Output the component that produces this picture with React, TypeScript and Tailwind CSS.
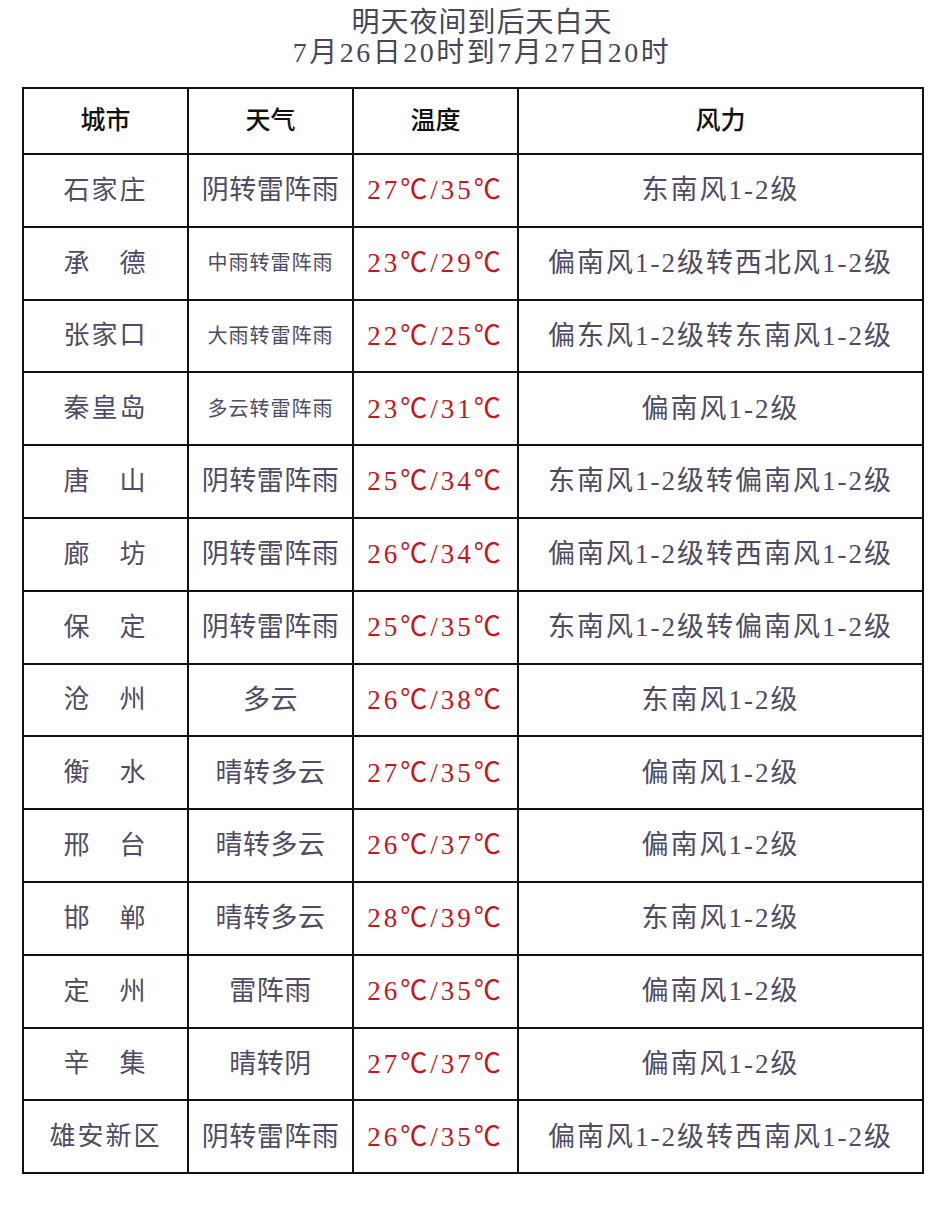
const ROWS: { city: string; weather: string; small?: boolean; temp: string; wind: string }[] = [
  { city: "石家庄", weather: "阴转雷阵雨", temp: "27℃/35℃", wind: "东南风1-2级" },
  { city: "承　德", weather: "中雨转雷阵雨", small: true, temp: "23℃/29℃", wind: "偏南风1-2级转西北风1-2级" },
  { city: "张家口", weather: "大雨转雷阵雨", small: true, temp: "22℃/25℃", wind: "偏东风1-2级转东南风1-2级" },
  { city: "秦皇岛", weather: "多云转雷阵雨", small: true, temp: "23℃/31℃", wind: "偏南风1-2级" },
  { city: "唐　山", weather: "阴转雷阵雨", temp: "25℃/34℃", wind: "东南风1-2级转偏南风1-2级" },
  { city: "廊　坊", weather: "阴转雷阵雨", temp: "26℃/34℃", wind: "偏南风1-2级转西南风1-2级" },
  { city: "保　定", weather: "阴转雷阵雨", temp: "25℃/35℃", wind: "东南风1-2级转偏南风1-2级" },
  { city: "沧　州", weather: "多云", temp: "26℃/38℃", wind: "东南风1-2级" },
  { city: "衡　水", weather: "晴转多云", temp: "27℃/35℃", wind: "偏南风1-2级" },
  { city: "邢　台", weather: "晴转多云", temp: "26℃/37℃", wind: "偏南风1-2级" },
  { city: "邯　郸", weather: "晴转多云", temp: "28℃/39℃", wind: "东南风1-2级" },
  { city: "定　州", weather: "雷阵雨", temp: "26℃/35℃", wind: "偏南风1-2级" },
  { city: "辛　集", weather: "晴转阴", temp: "27℃/37℃", wind: "偏南风1-2级" },
  { city: "雄安新区", weather: "阴转雷阵雨", temp: "26℃/35℃", wind: "偏南风1-2级转西南风1-2级" },
];

const cell = "border-2 border-[#111] text-center align-middle p-0";

export default function App() {
  return (
    <div className="w-[942px] h-[1218px] bg-white font-['Liberation_Serif','Noto_Sans_CJK_SC',serif]">
      {/* title */}
      <div className="pt-[8px] pl-[22px] text-center text-[28px] leading-[30px] text-[#4a4659]">
        <div className="tracking-[1px]">明天夜间到后天白天</div>
        <div className="tracking-[2.5px]">7月26日20时到7月27日20时</div>
      </div>

      <table className="mt-[19px] ml-[22px] w-[900px] table-fixed border-collapse">
        <colgroup>
          <col className="w-[165px]" />
          <col className="w-[165px]" />
          <col className="w-[165px]" />
          <col className="w-[405px]" />
        </colgroup>
        <thead>
          <tr className="h-[66px] text-[25px] text-[#111]">
            <th className={`${cell} font-medium`}>城市</th>
            <th className={`${cell} font-medium`}>天气</th>
            <th className={`${cell} font-medium`}>温度</th>
            <th className={`${cell} font-medium`}>风力</th>
          </tr>
        </thead>
        <tbody>
          {ROWS.map((r) => (
            <tr key={r.city} className="h-[72.8px] text-[#4f4b63]">
              <td className={`${cell} text-[26px] tracking-[2px]`}>{r.city}</td>
              <td className={`${cell} ${r.small ? "text-[20px] tracking-[1px]" : "text-[27px] tracking-[0.5px]"}`}>{r.weather}</td>
              <td className={`${cell} text-[27px] text-[#c4161c] tracking-[3px]`}>{r.temp}</td>
              <td className={`${cell} text-[27px] tracking-[2px]`}>{r.wind}</td>
            </tr>
          ))}
        </tbody>
      </table>
    </div>
  );
}
